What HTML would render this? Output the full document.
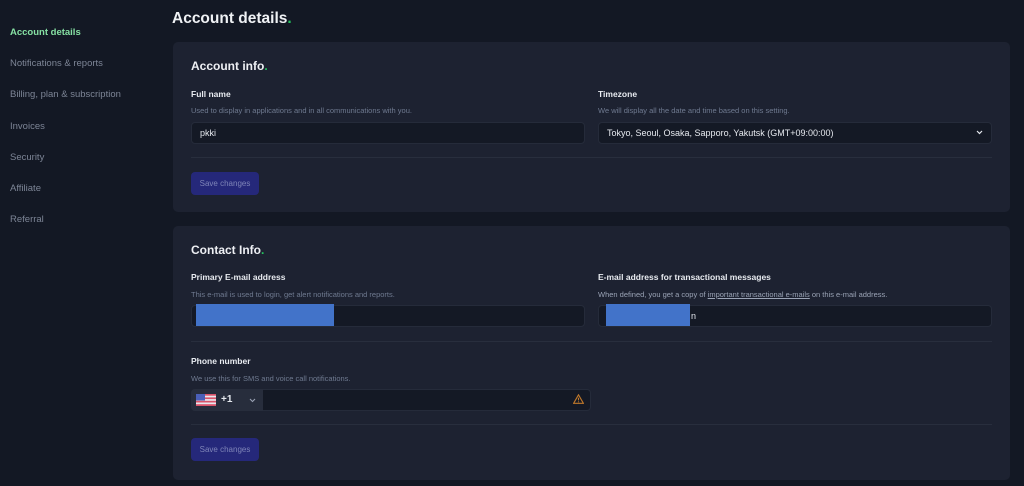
<!DOCTYPE html>
<html><head><style>
*{margin:0;padding:0;box-sizing:border-box}
body{width:1024px;height:486px;background:#131824;font-family:"Liberation Sans",sans-serif;position:relative;overflow:hidden;color:#e6e9ef}
.a{position:absolute;white-space:nowrap}
.nav{font-size:9.5px;color:#7d8596;left:10px}
.card{position:absolute;left:173px;width:837px;background:#1d2231;border-radius:5px}
.h{font-size:12px;font-weight:bold;color:#eef0f4}
.g{color:#22c55e}
.lab{font-size:8.5px;font-weight:bold;color:#e9ecf1}
.hlp{font-size:7.5px;color:#6f7a90}
.inp{position:absolute;background:#141925;border:1px solid #252b3a;border-radius:4px;height:22px;font-size:9px;color:#e6e9ef;padding-left:8px;line-height:20px}
.div{position:absolute;height:1px;background:#282e3d}
.btn{position:absolute;width:68px;height:23px;background:#25287a;border-radius:4px;font-size:8px;color:#7f85b8;text-align:center;line-height:23px}
.blue{position:absolute;background:#4273c9}
</style></head><body>
<div class="a" style="left:172px;top:10px;font-size:15.5px;font-weight:bold;color:#f0f2f5">Account details<span class="g">.</span></div>
<div class="a nav" style="top:27px;color:#86e0a3;font-weight:bold">Account details</div>
<div class="a nav" style="top:58px">Notifications &amp; reports</div>
<div class="a nav" style="top:89px">Billing, plan &amp; subscription</div>
<div class="a nav" style="top:121px">Invoices</div>
<div class="a nav" style="top:152px">Security</div>
<div class="a nav" style="top:183px">Affiliate</div>
<div class="a nav" style="top:214px">Referral</div>

<div class="card" style="top:42px;height:170px"></div>
<div class="a h" style="left:191px;top:59px">Account info<span class="g">.</span></div>
<div class="a lab" style="left:191px;top:89px">Full name</div>
<div class="a hlp" style="left:191px;top:106px">Used to display in applications and in all communications with you.</div>
<div class="inp" style="left:191px;top:122px;width:394px">pkki</div>
<div class="a lab" style="left:598px;top:89px">Timezone</div>
<div class="a hlp" style="left:598px;top:106px">We will display all the date and time based on this setting.</div>
<div class="inp" style="left:598px;top:122px;width:394px">Tokyo, Seoul, Osaka, Sapporo, Yakutsk (GMT+09:00:00)</div>
<svg style="position:absolute;left:976px;top:130px" width="7" height="5" viewBox="0 0 7 5"><path d="M1 1l2.5 2.5L6 1" fill="none" stroke="#e6e9ef" stroke-width="1.2"/></svg>
<div class="div" style="left:191px;top:157px;width:801px"></div>
<div class="btn" style="left:191px;top:172px">Save changes</div>

<div class="card" style="top:226px;height:254px"></div>
<div class="a h" style="left:191px;top:243px">Contact Info<span class="g">.</span></div>
<div class="a lab" style="left:191px;top:272px">Primary E-mail address</div>
<div class="a hlp" style="left:191px;top:290px">This e-mail is used to login, get alert notifications and reports.</div>
<div class="inp" style="left:191px;top:305px;width:394px"></div>
<div class="blue" style="left:196px;top:304px;width:138px;height:22px"></div>
<div class="a lab" style="left:598px;top:272px">E-mail address for transactional messages</div>
<div class="a hlp" style="left:598px;top:290px;color:#9aa3b5">When defined, you get a copy of <u>important transactional e-mails</u> on this e-mail address.</div>
<div class="inp" style="left:598px;top:305px;width:394px;padding-left:92px">n</div>
<div class="blue" style="left:606px;top:304px;width:84px;height:22px"></div>
<div class="div" style="left:191px;top:341px;width:801px"></div>
<div class="a lab" style="left:191px;top:356px">Phone number</div>
<div class="a hlp" style="left:191px;top:374px">We use this for SMS and voice call notifications.</div>
<div class="inp" style="left:191px;top:389px;width:400px;padding:0"></div>
<div style="position:absolute;left:191px;top:389px;width:72px;height:22px;background:#272d3c;border-radius:4px 0 0 4px"></div>
<svg style="position:absolute;left:196px;top:394px" width="20" height="12" viewBox="0 0 20 12"><rect width="20" height="12" fill="#e8e8ee"/><g fill="#d9536a"><rect y="0" width="20" height="1.7"/><rect y="3.4" width="20" height="1.7"/><rect y="6.8" width="20" height="1.7"/><rect y="10.2" width="20" height="1.8"/></g><rect width="9" height="6.5" fill="#4a5fb8"/></svg>
<div class="a" style="left:221px;top:394px;font-size:10px;font-weight:bold;color:#e6e9ef">+1</div>
<svg style="position:absolute;left:249px;top:398px" width="7" height="5" viewBox="0 0 7 5"><path d="M1 1l2.5 2.5L6 1" fill="none" stroke="#9aa3b5" stroke-width="1.1"/></svg>
<svg style="position:absolute;left:573px;top:394px" width="11" height="10" viewBox="0 0 11 10"><path d="M5.5 0.8L10.4 9.3H0.6Z" fill="none" stroke="#c0782a" stroke-width="1.1"/><path d="M5.5 3.8v2.6M5.5 7.4v0.8" stroke="#c0782a" stroke-width="1.1"/></svg>
<div class="div" style="left:191px;top:424px;width:801px"></div>
<div class="btn" style="left:191px;top:438px">Save changes</div>
</body></html>
